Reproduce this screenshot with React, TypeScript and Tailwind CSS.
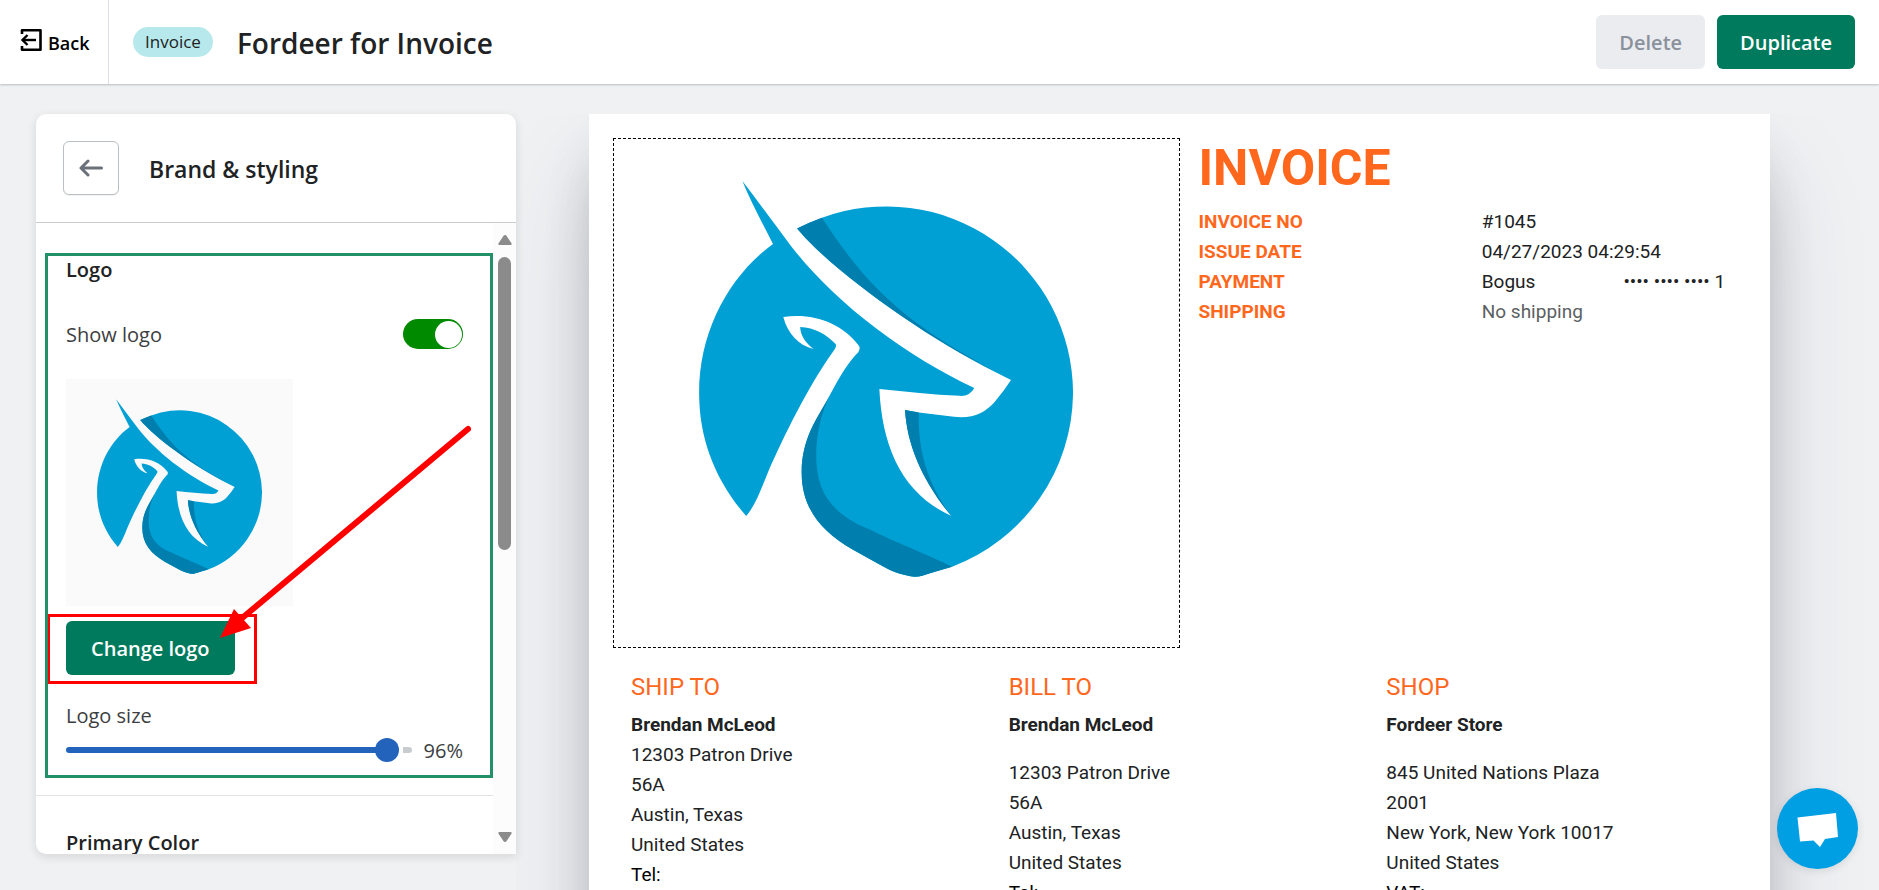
import { useState } from "react";

function DeerLogo({ className }: { className: string }) {
  return (
    <svg viewBox="99 61 374 396" className={className} role="img" aria-label="Store logo">
      <g transform="scale(0.3827 0.3444)">
        <path
          fill="#00a0d4"
          d="M372 177 C415 240 458 305 500 367 C610 525 790 680 978 778 Q966 803 940 801 C870 799 800 788 730 781 C737 950 790 1085 917 1149 C845 1050 803 950 797 842 L833 849 L925 862 C975 868 1005 850 1030 820 Q1055 788 1074 755 L1030 730 C840 625 600 430 515 315 Q548 297 580 284 A488 543 0 0 1 1236 792 A488 543 0 0 1 920 1297 Q870 1313 842 1323 Q825 1329 808 1324 C770 1316 745 1300 720 1284 L660 1247 C580 1195 527 1130 527 1024 C527 920 570 865 600 800 C630 735 655 695 675 674 Q682 662 675 653 C630 590 560 560 479 572 C490 620 520 655 558 665 C535 645 524 625 523 601 C560 602 595 625 615 650 Q620 655 612 668 C540 780 480 920 440 1020 C420 1075 405 1120 382 1150 C300 1045 259 925 259 792 C259 610 340 450 452 360 C425 300 395 240 372 177 Z"
        />
        <path fill="#007ead" d="M515 315 Q548 297 580 284 C700 490 800 590 1030 728 C840 625 600 430 515 315 Z" />
        <path fill="#007ead" d="M797 842 L833 849 C830 970 860 1060 917 1149 C845 1050 803 950 797 842 Z" />
        <path
          fill="#007ead"
          d="M600 800 C570 865 527 920 527 1024 C527 1130 580 1195 660 1247 L720 1284 C745 1300 770 1316 808 1324 Q825 1329 842 1323 Q870 1313 920 1297 C840 1255 760 1220 700 1187 C600 1140 565 1075 565 975 C565 900 580 850 600 800 Z"
        />
      </g>
    </svg>
  );
}

function ExitIcon() {
  return (
    <svg viewBox="0 0 22 24" className="h-6 w-[22px]" fill="none" stroke="#000" aria-hidden="true">
      <path strokeWidth="2.6" strokeLinejoin="round" d="M2 6 V2.3 H20.5 V21.7 H2 V18" />
      <path strokeWidth="2.4" d="M16 12 H3" />
      <path strokeWidth="2.4" d="M7.5 7 L2.5 12 L7.5 17" />
    </svg>
  );
}

function TopBar() {
  return (
    <header className="relative z-10 flex h-[84px] shrink-0 items-center bg-white pr-6 shadow-[0_1px_2px_rgba(0,0,0,0.22)]">
      <a href="#back" className="flex h-full w-[109px] items-center gap-1.5 border-r border-[#dcdee3] pl-5 text-[18px] font-semibold text-black">
        <span className="pb-1">
          <ExitIcon />
        </span>
        <span className="pt-0.5">Back</span>
      </a>
      <span className="ml-6 flex h-[30px] items-center rounded-full bg-[#b7e9ec] px-3 text-[17px] text-[#202223]">Invoice</span>
      <h1 className="ml-6 pt-0.5 text-[28px] font-semibold text-[#202223]">Fordeer for Invoice</h1>
      <div className="ml-auto flex gap-3">
        <button type="button" disabled className="h-[54px] rounded-md bg-[#ebecf0] px-[23px] pt-0.5 text-[20px] font-semibold text-[#8a919c]">
          Delete
        </button>
        <button type="button" className="h-[54px] rounded-md bg-[#007a5c] px-[23px] pt-0.5 text-[20px] font-semibold text-white">
          Duplicate
        </button>
      </div>
    </header>
  );
}

function ScrollBar() {
  return (
    <div className="flex w-[23px] shrink-0 flex-col items-center bg-[#fcfcfc] py-3" aria-hidden="true">
      <svg viewBox="0 0 14 10" className="h-2.5 w-3.5" fill="#8b8b8b">
        <path d="M7 0 Q8 0 8.6 1 L13.6 8.5 Q14 10 12.6 10 H1.4 Q0 10 .4 8.5 L5.4 1 Q6 0 7 0 Z" />
      </svg>
      <span className="mt-3 h-[293px] w-[13px] rounded-full bg-[#8b8b8b]" />
      <svg viewBox="0 0 14 10" className="mt-auto h-2.5 w-3.5" fill="#8b8b8b">
        <path d="M7 10 Q6 10 5.4 9 L.4 1.5 Q0 0 1.4 0 H12.6 Q14 0 13.6 1.5 L8.6 9 Q8 10 7 10 Z" />
      </svg>
    </div>
  );
}

function Sidebar() {
  const [showLogo, setShowLogo] = useState(true);
  const [size, setSize] = useState(96);
  const center = `calc(12px + (100% - 24px) * ${size / 100})`;
  return (
    <aside className="relative z-10 mt-[30px] mb-9 ml-9 flex w-[480px] shrink-0 flex-col overflow-hidden rounded-l-[10px] rounded-tr-[10px] bg-white shadow-[0_3px_10px_rgba(23,24,24,0.12)]">
      <div className="flex h-[109px] shrink-0 items-center gap-[30px] border-b border-[#c9cccf] pl-[27px]">
        <button type="button" aria-label="Go back" className="flex h-[54px] w-14 items-center justify-center rounded-md border border-[#babfc3] bg-white shadow-[0_1px_0_rgba(0,0,0,0.05)]">
          <svg viewBox="0 0 24 18" className="h-[18px] w-6" fill="none" stroke="#6b717b" strokeWidth="3" strokeLinecap="round" strokeLinejoin="round" aria-hidden="true">
            <path d="M22.5 9 H2 M9 2 L2 9 L9 16" />
          </svg>
        </button>
        <h2 className="pt-0.5 text-[23px] font-semibold text-[#202223]">Brand &amp; styling</h2>
      </div>
      <div className="flex min-h-0 flex-1">
        <div className="min-w-0 flex-1 overflow-hidden">
          <section className="relative h-[573px] border-b border-[#e1e3e5] px-[30px] pt-8">
            <h3 className="text-[20px] leading-[30px] font-semibold text-[#202223]">Logo</h3>
            <div className="mt-[34px] flex items-start justify-between">
              <label htmlFor="show-logo" className="pt-px text-[20px] leading-[30px] text-[#3c3e41]">
                Show logo
              </label>
              <input
                id="show-logo"
                type="checkbox"
                role="switch"
                checked={showLogo}
                onChange={(e) => setShowLogo(e.target.checked)}
                className="flex h-[30px] w-[60px] appearance-none items-center rounded-full bg-[#b5b5b5] px-px before:size-[27px] before:rounded-full before:bg-white checked:justify-end checked:bg-[#008a00]"
              />
            </div>
            <div className="mt-[29px] size-[227px] bg-[#fafafa] pt-5 pl-[31px]">
              <DeerLogo className="h-[175px] w-[165px]" />
            </div>
            <div className="mt-[15px] flex">
              <div className="relative">
                <button type="button" className="h-[54px] rounded-md bg-[#007a5c] px-[25px] pt-0.5 text-[20px] font-semibold text-white">
                  Change logo
                </button>
                <span className="pointer-events-none absolute -top-[7px] -right-[22px] -bottom-[9px] -left-[19px] border-3 border-[#ff0000]" />
              </div>
            </div>
            <label htmlFor="logo-size" className="mt-[26px] block text-[20px] leading-[30px] text-[#3c3e41]">
              Logo size
            </label>
            <div className="mt-[3px] flex items-center gap-3">
              <input
                id="logo-size"
                type="range"
                min={0}
                max={100}
                value={size}
                onChange={(e) => setSize(Number(e.target.value))}
                style={{
                  backgroundImage: `linear-gradient(to right, #2463bc ${center}, #fff ${center}, #fff calc(${center} + 16px), #c9cccf calc(${center} + 16px))`,
                }}
                className="h-1.5 min-w-0 flex-1 appearance-none rounded-full [&::-webkit-slider-thumb]:size-6 [&::-webkit-slider-thumb]:appearance-none [&::-webkit-slider-thumb]:rounded-full [&::-webkit-slider-thumb]:bg-[#2463bc]"
              />
              <output htmlFor="logo-size" className="pt-0.5 text-[20px] leading-[30px] text-[#3c3e41]">
                {size}%
              </output>
            </div>
            <span className="pointer-events-none absolute top-[30px] right-0 bottom-[17px] left-[9px] border-3 border-[#239168]" />
            <svg viewBox="0 0 254 216" className="pointer-events-none absolute top-[202px] left-[183px] h-[216px] w-[254px]" aria-hidden="true">
              <path d="M249 4 L22 194" stroke="#ff0000" strokeWidth="6" strokeLinecap="round" />
              <path d="M1 213 L15 184 L32 203 Z" fill="#ff0000" />
            </svg>
          </section>
          <section className="px-[30px] pt-8">
            <h3 className="text-[20px] leading-[30px] font-semibold text-[#202223]">Primary Color</h3>
          </section>
        </div>
        <ScrollBar />
      </div>
    </aside>
  );
}

type Party = { title: string; name: string; lines: string[]; last: string; spaced: boolean };

const parties: Party[] = [
  { title: "SHIP TO", name: "Brendan McLeod", lines: ["12303 Patron Drive", "56A", "Austin, Texas", "United States"], last: "Tel:", spaced: false },
  { title: "BILL TO", name: "Brendan McLeod", lines: ["12303 Patron Drive", "56A", "Austin, Texas", "United States"], last: "Tel:", spaced: true },
  { title: "SHOP", name: "Fordeer Store", lines: ["845 United Nations Plaza", "2001", "New York, New York 10017", "United States"], last: "VAT:", spaced: true },
];

function MetaRow({ label, children }: { label: string; children: React.ReactNode }) {
  return (
    <div className="grid grid-cols-2">
      <dt className="px-[19px] font-bold text-[#ff671d]">{label}</dt>
      <dd>{children}</dd>
    </div>
  );
}

function Invoice() {
  return (
    <main className="mt-[30px] min-w-0 flex-1 overflow-hidden pr-[109px] pl-[73px]">
      <article className="min-h-[1200px] bg-white p-6 font-[Roboto,sans-serif] text-[19px] leading-[30px] text-[#202223] shadow-[0_50px_100px_-20px_rgba(50,50,93,0.25),0_30px_60px_-30px_rgba(0,0,0,0.3),0_30px_60px_-10px_rgba(0,0,0,0.08)]">
        <div className="grid grid-cols-2">
          <div className="h-[510px] border border-dashed border-black pt-[42px] pl-[85px]">
            <DeerLogo className="h-[396px] w-[374px]" />
          </div>
          <div>
            <h2 className="px-[19px] text-[50px] leading-[60px] font-bold text-[#ff671d]">INVOICE</h2>
            <dl className="mt-[9px]">
              <MetaRow label="INVOICE NO">
                <span className="px-[19px]">#1045</span>
              </MetaRow>
              <MetaRow label="ISSUE DATE">
                <span className="px-[19px]">04/27/2023 04:29:54</span>
              </MetaRow>
              <MetaRow label="PAYMENT">
                <div className="grid grid-cols-2">
                  <span className="pl-[19px]">Bogus</span>
                  <span className="pl-[19px] whitespace-nowrap">•••• •••• •••• 1</span>
                </div>
              </MetaRow>
              <MetaRow label="SHIPPING">
                <span className="px-[19px] text-[#5c5f62]">No shipping</span>
              </MetaRow>
            </dl>
          </div>
        </div>
        <div className="mt-[21px] grid grid-cols-3">
          {parties.map((p) => (
            <section key={p.title} className="px-[18px]">
              <h3 className="text-[24px] leading-[36px] text-[#ff671d]">{p.title}</h3>
              <p className="mt-[5px] font-bold">{p.name}</p>
              <div className={p.spaced ? "pt-[18px]" : ""}>
                {p.lines.map((l) => (
                  <p key={l}>{l}</p>
                ))}
                <p className="text-black">{p.last}</p>
              </div>
            </section>
          ))}
        </div>
      </article>
    </main>
  );
}

export default function App() {
  return (
    <div className="flex h-screen flex-col overflow-hidden bg-[#f0f1f3] font-['Open_Sans',sans-serif]">
      <TopBar />
      <div className="flex min-h-0 flex-1">
        <Sidebar />
        <Invoice />
      </div>
      <button type="button" aria-label="Open chat" className="fixed right-[21px] bottom-[21px] z-20 flex size-[81px] items-center justify-center rounded-full bg-[#009fe3] shadow-[0_2px_8px_rgba(0,0,0,0.1)]">
        <svg viewBox="0 0 81 81" className="size-[81px]" aria-hidden="true">
          <path d="M20.5 29.5 L59 25 L61 49 L48 51 L43 59 L36.5 52.5 L23 53.5 Z" fill="#fff" />
        </svg>
      </button>
    </div>
  );
}
